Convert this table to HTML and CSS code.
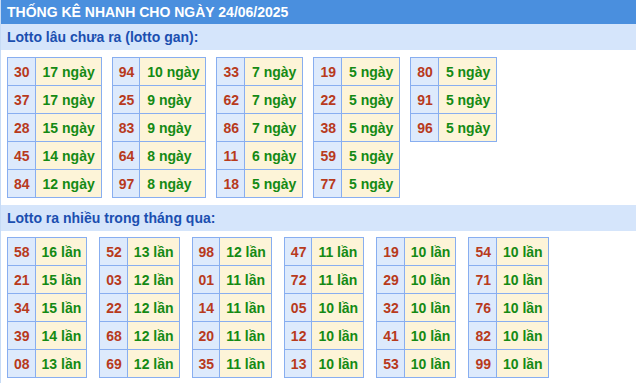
FILE: index.html
```html
<!DOCTYPE html>
<html lang="vi">
<head>
<meta charset="utf-8">
<title>Thống kê nhanh</title>
<link rel="stylesheet" href="styles.css">
</head>
<body>
<div class="box">
  <div class="head">THỐNG KÊ NHANH CHO NGÀY 24/06/2025</div>
  <div class="sub">Lotto lâu chưa ra (lotto gan):</div>
  <div class="tables tables1">
    <table class="t"><tr><td class="n">30</td><td class="v">17 ngày</td></tr><tr><td class="n">37</td><td class="v">17 ngày</td></tr><tr><td class="n">28</td><td class="v">15 ngày</td></tr><tr><td class="n">45</td><td class="v">14 ngày</td></tr><tr><td class="n">84</td><td class="v">12 ngày</td></tr></table>
    <table class="t"><tr><td class="n">94</td><td class="v">10 ngày</td></tr><tr><td class="n">25</td><td class="v">9 ngày</td></tr><tr><td class="n">83</td><td class="v">9 ngày</td></tr><tr><td class="n">64</td><td class="v">8 ngày</td></tr><tr><td class="n">97</td><td class="v">8 ngày</td></tr></table>
    <table class="t"><tr><td class="n">33</td><td class="v">7 ngày</td></tr><tr><td class="n">62</td><td class="v">7 ngày</td></tr><tr><td class="n">86</td><td class="v">7 ngày</td></tr><tr><td class="n">11</td><td class="v">6 ngày</td></tr><tr><td class="n">18</td><td class="v">5 ngày</td></tr></table>
    <table class="t"><tr><td class="n">19</td><td class="v">5 ngày</td></tr><tr><td class="n">22</td><td class="v">5 ngày</td></tr><tr><td class="n">38</td><td class="v">5 ngày</td></tr><tr><td class="n">59</td><td class="v">5 ngày</td></tr><tr><td class="n">77</td><td class="v">5 ngày</td></tr></table>
    <table class="t"><tr><td class="n">80</td><td class="v">5 ngày</td></tr><tr><td class="n">91</td><td class="v">5 ngày</td></tr><tr><td class="n">96</td><td class="v">5 ngày</td></tr></table>
  </div>
  <div class="sub sub2">Lotto ra nhiều trong tháng qua:</div>
  <div class="tables tables2">
    <table class="t"><tr><td class="n">58</td><td class="v">16 lần</td></tr><tr><td class="n">21</td><td class="v">15 lần</td></tr><tr><td class="n">34</td><td class="v">15 lần</td></tr><tr><td class="n">39</td><td class="v">14 lần</td></tr><tr><td class="n">08</td><td class="v">13 lần</td></tr></table>
    <table class="t"><tr><td class="n">52</td><td class="v">13 lần</td></tr><tr><td class="n">03</td><td class="v">12 lần</td></tr><tr><td class="n">22</td><td class="v">12 lần</td></tr><tr><td class="n">68</td><td class="v">12 lần</td></tr><tr><td class="n">69</td><td class="v">12 lần</td></tr></table>
    <table class="t"><tr><td class="n">98</td><td class="v">12 lần</td></tr><tr><td class="n">01</td><td class="v">11 lần</td></tr><tr><td class="n">14</td><td class="v">11 lần</td></tr><tr><td class="n">20</td><td class="v">11 lần</td></tr><tr><td class="n">35</td><td class="v">11 lần</td></tr></table>
    <table class="t"><tr><td class="n">47</td><td class="v">11 lần</td></tr><tr><td class="n">72</td><td class="v">11 lần</td></tr><tr><td class="n">05</td><td class="v">10 lần</td></tr><tr><td class="n">12</td><td class="v">10 lần</td></tr><tr><td class="n">13</td><td class="v">10 lần</td></tr></table>
    <table class="t"><tr><td class="n">19</td><td class="v">10 lần</td></tr><tr><td class="n">29</td><td class="v">10 lần</td></tr><tr><td class="n">32</td><td class="v">10 lần</td></tr><tr><td class="n">41</td><td class="v">10 lần</td></tr><tr><td class="n">53</td><td class="v">10 lần</td></tr></table>
    <table class="t"><tr><td class="n">54</td><td class="v">10 lần</td></tr><tr><td class="n">71</td><td class="v">10 lần</td></tr><tr><td class="n">76</td><td class="v">10 lần</td></tr><tr><td class="n">82</td><td class="v">10 lần</td></tr><tr><td class="n">99</td><td class="v">10 lần</td></tr></table>
  </div>
</div>
</body>
</html>
```
FILE: styles.css
```css
html, body {
  margin: 0;
  padding: 0;
  background: #ffffff;
}
body {
  font-family: "Liberation Sans", Arial, sans-serif;
  font-weight: bold;
}
.box {
  border-left: 1px solid #c6dbf6;
  min-height: 383px;
  box-sizing: border-box;
}
.head {
  height: 24px;
  line-height: 24px;
  background: #4a8fde;
  color: #ffffff;
  font-size: 14px;
  padding-left: 6px;
  white-space: nowrap;
}
.sub {
  height: 26px;
  line-height: 27px;
  background: #d5e5fb;
  color: #1b4fb0;
  font-size: 14px;
  padding-left: 6px;
}
.sub2 {
  margin-top: 7px;
}
.tables {
  display: flex;
  align-items: flex-start;
  padding: 7px 0 0 6px;
}
.tables1 {
  gap: 10px;
}
.tables2 {
  padding-top: 6px;
  gap: 12px;
}
.t {
  border-collapse: collapse;
  font-size: 14px;
}
.t td {
  border: 1px solid #88aef0;
  height: 27px;
  padding: 0 5px 0 6px;
  white-space: nowrap;
  text-align: left;
}
.tables1 .t .v {
  padding: 0 6px 0 7px;
}
.t .n {
  background: #ddeafc;
  color: #b83a1c;
}
.t .v {
  background: #fdf4d8;
  color: #148a14;
}
```
